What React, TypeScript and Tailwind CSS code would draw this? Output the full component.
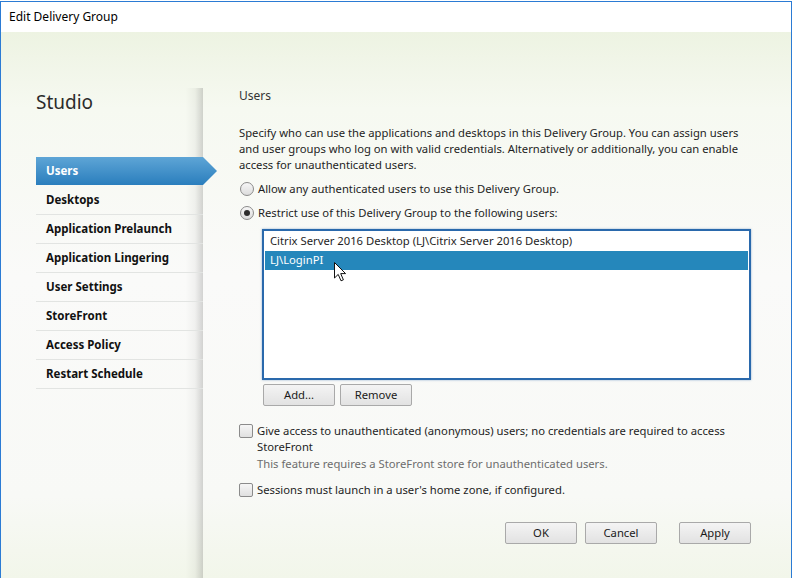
import React from "react";

const navItems = [
  "Users",
  "Desktops",
  "Application Prelaunch",
  "Application Lingering",
  "User Settings",
  "StoreFront",
  "Access Policy",
  "Restart Schedule",
];

const Radio = ({ checked }: { checked?: boolean }) => (
  <span className="flex h-[14px] w-[14px] shrink-0 items-center justify-center rounded-full border border-[#8b8b8b] bg-[linear-gradient(#f6f6f6,#dcdcdc)]">
    {checked && <span className="h-[6px] w-[6px] rounded-full bg-[#2c2c2c]" />}
  </span>
);

const Checkbox = () => (
  <span className="block h-[14px] w-[14px] shrink-0 rounded-[2px] border border-[#8b8b8b] bg-[linear-gradient(#f6f6f6,#e0e0e0)]" />
);

const Button = ({ label }: { label: string }) => (
  <button className="h-[22px] w-[72px] rounded-[2px] border border-[#a9a9a9] bg-[linear-gradient(#f4f4f4,#e2e2e2)] text-[11.25px] text-[#1a1a1a]">
    {label}
  </button>
);

const Cursor = () => (
  <svg
    className="absolute left-[70px] top-[31px]"
    width="13"
    height="21"
    viewBox="0 0 13 21"
  >
    <path
      d="M0.5 0.5 L0.5 16 L4.2 12.4 L7 18.8 L9.4 17.8 L6.7 11.6 L11.6 11.6 Z"
      fill="#fff"
      stroke="#111"
      strokeWidth="1"
      strokeLinejoin="round"
    />
  </svg>
);

export default function App() {
  return (
    <div
      className="h-[578px] w-[792px] overflow-hidden bg-white pt-[1px] text-[11.25px] text-[#1e1e1e]"
      style={{ fontFamily: '"Noto Sans", "Open Sans", sans-serif' }}
    >
      <div className="flex h-[577px] flex-col border-x border-t border-[#2b7bd4]">
        {/* title bar */}
        <div className="flex h-[30px] shrink-0 items-center bg-white pl-[8px] text-[12px] text-black">
          Edit Delivery Group
        </div>

        {/* body */}
        <div className="flex flex-1 bg-[linear-gradient(#edf3e2,#f6f9f1_14%,#fafaf9_45%,#f8f9f6_85%,#f2f6ea)]">
          {/* sidebar */}
          <div className="flex w-[202px] shrink-0 flex-col">
            <div className="h-[56px] shrink-0" />
            <div className="flex-1 bg-[linear-gradient(to_right,rgba(0,0,0,0)_184px,rgba(0,0,0,0.04)_194px,rgba(0,0,0,0.16)_100%)] pl-[35px]">
              <div className="h-[69px] pt-[1px] text-[19px] leading-[27px] text-[#2b2b2b]">
                Studio
              </div>
              <ul className="w-[167px] text-[11.5px]">
                {navItems.map((item, i) =>
                  i === 0 ? (
                    <li
                      key={item}
                      className="relative z-10 mb-[1px] flex h-[28px] w-[181px] items-center bg-[linear-gradient(#5ea5d6,#2a7ebd)] pl-[10px] font-bold text-white [clip-path:polygon(0_0,calc(100%-14px)_0,100%_50%,calc(100%-14px)_100%,0_100%)]"
                    >
                      {item}
                    </li>
                  ) : (
                    <li
                      key={item}
                      className="flex h-[29px] items-center border-b border-[#e2e4e2] pl-[10px] font-bold text-[#111]"
                    >
                      {item}
                    </li>
                  )
                )}
              </ul>
            </div>
          </div>

          {/* main */}
          <div className="flex flex-1 flex-col pl-[36px] pr-[40px] pt-[56px]">
            <div className="h-[16px] text-[12px] leading-[16px] text-[#333]">Users</div>

            <p className="mt-[21px] leading-[16px]">
              Specify who can use the applications and desktops in this Delivery Group. You can assign users
              <br />
              and user groups who log on with valid credentials. Alternatively or additionally, you can enable
              <br />
              access for unauthenticated users.
            </p>

            <label className="mt-[8px] flex h-[16px] items-center gap-[4px] pl-[1px]">
              <Radio />
              <span>Allow any authenticated users to use this Delivery Group.</span>
            </label>
            <label className="mt-[8px] flex h-[16px] items-center gap-[4px] pl-[1px]">
              <Radio checked />
              <span>Restrict use of this Delivery Group to the following users:</span>
            </label>

            <div className="ml-[23px] mt-[8px] flex flex-col">
              <div className="relative h-[151px] border-2 border-[#2a69ac] bg-white p-[1px] shadow-[0_0_2px_rgba(40,100,170,0.5)]">
                <div className="flex h-[19px] items-center pl-[5px]">
                  Citrix Server 2016 Desktop (LJ\Citrix Server 2016 Desktop)
                </div>
                <div className="flex h-[19px] items-center bg-[#2587bb] pl-[5px] text-white">
                  LJ\LoginPI
                </div>
                <Cursor />
              </div>
              <div className="mt-[4px] flex gap-[5px] pl-[1px]">
                <Button label="Add..." />
                <Button label="Remove" />
              </div>
            </div>

            <div className="mt-[17px] flex gap-[4px]">
              <span className="pt-[1px]">
                <Checkbox />
              </span>
              <div className="leading-[16px]">
                Give access to unauthenticated (anonymous) users; no credentials are required to access
                <br />
                StoreFront
                <div className="mt-[1px] text-[#6d6d6d]">
                  This feature requires a StoreFront store for unauthenticated users.
                </div>
              </div>
            </div>

            <label className="mt-[10px] flex h-[16px] items-center gap-[4px]">
              <Checkbox />
              <span>Sessions must launch in a user's home zone, if configured.</span>
            </label>

            <div className="mt-[24px] flex justify-end">
              <div className="flex gap-[8px]">
                <Button label="OK" />
                <Button label="Cancel" />
              </div>
              <div className="ml-[22px]">
                <Button label="Apply" />
              </div>
            </div>
          </div>
        </div>
      </div>
    </div>
  );
}
